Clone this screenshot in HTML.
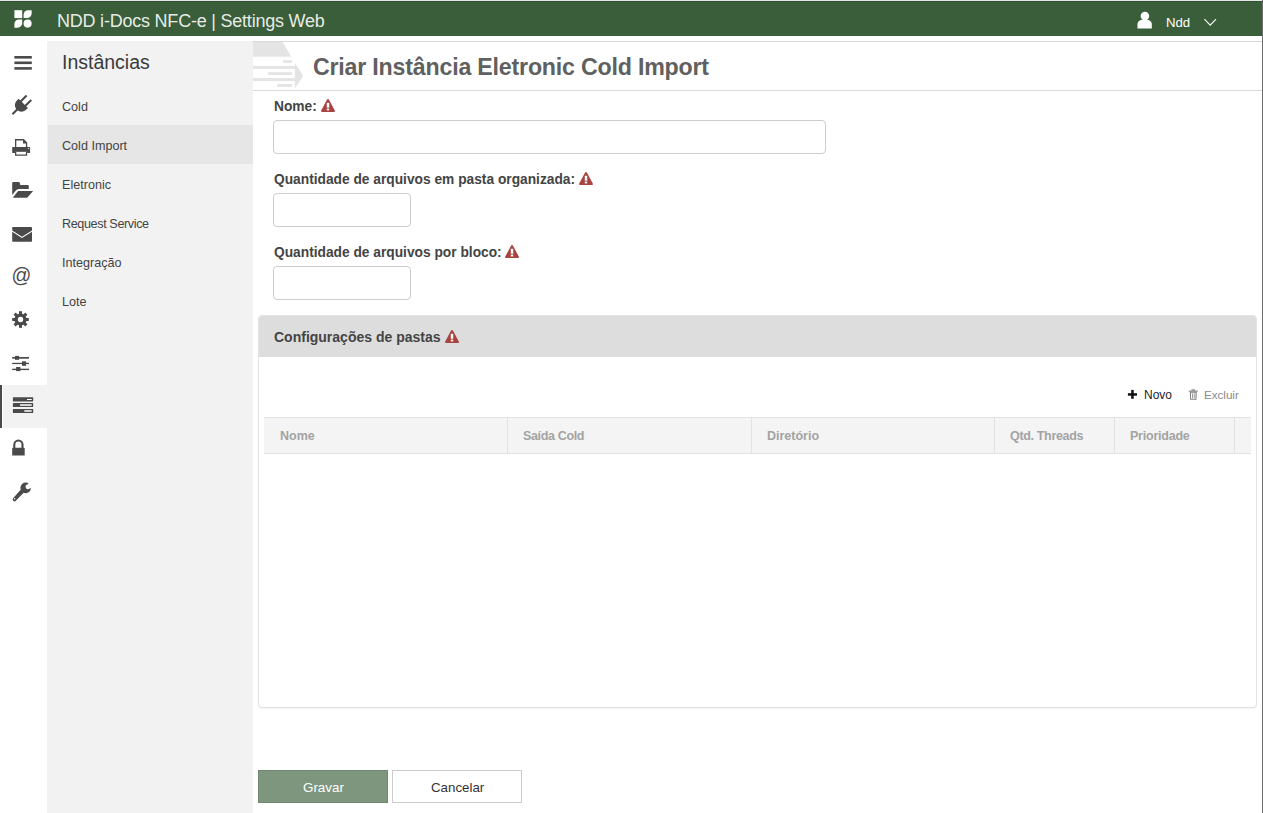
<!DOCTYPE html>
<html><head><meta charset="utf-8">
<style>
*{box-sizing:border-box;margin:0;padding:0}
html,body{width:1263px;height:813px;overflow:hidden;background:#fff}
body{position:relative;font-family:"Liberation Sans",sans-serif;color:#444}
.abs{position:absolute}
#topline{left:0;top:0;width:1263px;height:1px;background:#e6e6ea}
#hdr{left:0;top:1px;width:1262px;height:35px;background:#3b5e3a;border-top:1px solid #2f552f}
#rline{left:1262px;top:0;width:1px;height:813px;background:#6e6e6e}
.t{position:absolute;white-space:nowrap;line-height:1}
#rail{left:0;top:36px;width:47px;height:777px;background:#fff}
#side{left:47px;top:41px;width:206px;height:772px;background:#f2f2f2}
.item{position:absolute;left:0;width:206px;height:39px}
.item.sel{background:#e6e6e6;left:1px;width:205px}
.lbl{font-weight:bold;color:#444;font-size:13.75px}
.inp{position:absolute;border:1px solid #ccc;border-radius:4px;background:#fff}
.warn{position:absolute}
</style></head>
<body>
<div id="topline" class="abs"></div>
<div id="hdr" class="abs"></div>
<div id="rline" class="abs"></div>

<!-- logo -->
<svg class="abs" style="left:0;top:0" width="47" height="36" viewBox="0 0 47 36">
  <rect x="14.4" y="10.2" width="7.8" height="7.9" fill="#fff"/>
  <path d="M23.6 18.1 V14.8 A4.6 4.6 0 0 1 28.2 10.2 H31.6 V13.5 A4.6 4.6 0 0 1 27 18.1 Z" fill="#fff"/>
  <path d="M14.4 27.7 V24.1 A4.6 4.6 0 0 1 19 19.5 H22.2 V23.1 A4.6 4.6 0 0 1 17.6 27.7 Z" fill="#fff"/>
  <circle cx="27.6" cy="23.6" r="4.05" fill="#fff"/>
</svg>
<div class="t" style="left:57px;top:12px;font-size:18px;letter-spacing:-0.22px;color:rgba(255,255,255,0.9)">NDD i-Docs NFC-e | Settings Web</div>

<!-- user -->
<svg class="abs" style="left:1130px;top:6px" width="95" height="28" viewBox="1130 6 95 28">
  <circle cx="1144.9" cy="16" r="4.3" fill="#fff"/>
  <path d="M1137.5 28.6 V24.5 C1137.5 21.2 1140 19.6 1144.7 19.6 C1149.4 19.6 1151.8 21.2 1151.8 24.5 V28.6 Z" fill="#fff"/>
  <path d="M1204.4 19.2 L1210.2 25.2 L1216 19.2" fill="none" stroke="#fff" stroke-width="1.1"/>
</svg>
<div class="t" style="left:1166px;top:16px;font-size:13.2px;color:#fff">Ndd</div>

<div id="rail" class="abs"></div>
<div id="side" class="abs">
  <div class="t" style="left:15px;top:12px;font-size:19.5px;color:#3a3a3a">Instâncias</div>
  <div class="item" style="top:45px"><div class="t" style="left:15px;top:14.5px;font-size:12.6px">Cold</div></div>
  <div class="item sel" style="top:84px"><div class="t" style="left:14px;top:14.5px;font-size:12.6px">Cold Import</div></div>
  <div class="item" style="top:123px"><div class="t" style="left:15px;top:14.5px;font-size:12.6px">Eletronic</div></div>
  <div class="item" style="top:162px"><div class="t" style="left:15px;top:14.5px;font-size:12.6px;letter-spacing:-0.38px">Request Service</div></div>
  <div class="item" style="top:201px"><div class="t" style="left:15px;top:14.5px;font-size:12.6px">Integração</div></div>
  <div class="item" style="top:240px"><div class="t" style="left:15px;top:14.5px;font-size:12.6px">Lote</div></div>
</div>


<!-- rail icons -->
<div class="abs" style="left:3px;top:385px;width:44px;height:43px;background:#f2f2f2"></div>
<div class="abs" style="left:0;top:385px;width:2px;height:43px;background:#4a4a4a"></div>
<svg class="abs" style="left:0;top:36px" width="47" height="480" viewBox="0 36 47 480">
 <g fill="#4a4a4a">
  <!-- hamburger -->
  <rect x="14.4" y="56" width="17.4" height="2.6"/>
  <rect x="14.4" y="61.5" width="17.4" height="2.6"/>
  <rect x="14.4" y="67.1" width="17.4" height="2.6"/>
  <!-- plug -->
  <g transform="translate(23.27,103.42) rotate(45)">
    <path d="M-6.6 0 H6.6 V1.8 C6.6 6.4 3.6 9 0 9 C-3.6 9 -6.6 6.4 -6.6 1.8 Z"/>
    <rect x="-4.3" y="-8" width="2.1" height="8.5"/>
    <rect x="2.2" y="-8" width="2.1" height="8.5"/>
    <rect x="-1" y="8" width="2.1" height="7.4"/>
  </g>
  <!-- printer -->
  <path fill-rule="evenodd" d="M15 139.1 H23.8 L27.2 142.6 V147.2 H25.9 V143.4 H23 V140.4 H16.3 V147.2 H15 Z"/>
  <path d="M12.8 147 H29.5 Q30.1 147 30.1 147.6 V152.5 Q30.1 153.1 29.5 153.1 H27.2 V151.8 H15 V153.1 H12.8 Q12.2 153.1 12.2 152.5 V147.6 Q12.2 147 12.8 147 Z"/>
  <path fill-rule="evenodd" d="M15 151.6 H27.2 V155.8 H15 Z M16.3 151.8 V154.5 H25.9 V151.8 Z"/>
  <!-- folder open -->
  <path d="M12.2 183.2 Q12.2 182.1 13.3 182.1 H18.4 Q19.8 182.1 20 183.5 L20.2 185 H27.7 Q28.8 185 28.8 186.1 V188.9 H18.7 Q16.5 189.2 15 191.4 L12.2 195 Z"/>
  <path d="M18.1 190.9 H33.1 L27.2 197.8 H12.8 Z"/>
  <!-- envelope -->
  <path d="M12.2 227.6 Q12.2 226.9 12.9 226.9 H31.3 Q32 226.9 32 227.6 V230.4 L22 236.8 L12.2 230.4 Z"/>
  <path d="M12.2 231.8 L22 238.1 L32 231.8 V241 Q32 241.7 31.3 241.7 H12.9 Q12.2 241.7 12.2 241 Z"/>
  <!-- gear -->
  <g transform="translate(20.5,319.5)">
    <circle r="6.1"/>
    <rect x="-1.5" y="-8.3" width="3" height="16.6"/>
    <rect x="-1.5" y="-8.3" width="3" height="16.6" transform="rotate(45)"/>
    <rect x="-1.5" y="-8.3" width="3" height="16.6" transform="rotate(90)"/>
    <rect x="-1.5" y="-8.3" width="3" height="16.6" transform="rotate(135)"/>
    <circle r="2.7" fill="#fff"/>
  </g>
  <!-- sliders -->
  <rect x="12.2" y="357" width="16.8" height="1.7"/>
  <rect x="15" y="355.9" width="4.1" height="3.9"/>
  <rect x="12.2" y="362.8" width="16.8" height="1.3"/>
  <rect x="22" y="361.3" width="4.1" height="4.5"/>
  <rect x="12.2" y="368.7" width="16.8" height="1.4"/>
  <rect x="16.1" y="367" width="4.3" height="4.1"/>
  <!-- server -->
  <path fill-rule="evenodd" d="M12.9 397.6 Q12.9 397.2 13.3 397.2 H32.8 Q33.2 397.2 33.2 397.6 V401.1 Q33.2 401.5 32.8 401.5 H13.3 Q12.9 401.5 12.9 401.1 Z M27 399 V399.9 H31.6 V399 Z"/>
  <path fill-rule="evenodd" d="M12.9 403.4 Q12.9 403 13.3 403 H32.8 Q33.2 403 33.2 403.4 V406.5 Q33.2 406.9 32.8 406.9 H13.3 Q12.9 406.9 12.9 406.5 Z M20.1 404.5 V405.6 H31.6 V404.5 Z"/>
  <path fill-rule="evenodd" d="M12.9 409.3 Q12.9 408.9 13.3 408.9 H32.8 Q33.2 408.9 33.2 409.3 V412.5 Q33.2 412.9 32.8 412.9 H13.3 Q12.9 412.9 12.9 412.5 Z M24.4 410.4 V411.5 H31.6 V410.4 Z"/>
  <!-- lock -->
  <rect x="12.2" y="447.7" width="12.5" height="7.9" rx="0.7"/>
  <path d="M14.3 448 V444.6 A4.1 4.1 0 0 1 22.5 444.6 V448" fill="none" stroke="#4a4a4a" stroke-width="2.1"/>
  <!-- wrench -->
  <path fill-rule="evenodd" d="M25.9 482.6 A5.3 5.3 0 1 0 31 488 L28.8 489 A2.3 2.3 0 1 1 27.6 484.6 L28.4 482.9 Q27.3 482.6 25.9 482.6 Z"/>
  <path d="M20.9 489.6 L23.9 492.6 L15.6 500.9 Q14.5 502 13.2 500.7 Q12 499.4 13.1 498.3 Z"/>
 </g>
 <circle cx="14.6" cy="498.8" r="0.7" fill="#fff"/>
 <rect x="27" y="399" width="4.6" height="0.9" fill="#fff"/>
 <rect x="20.1" y="404.5" width="11.5" height="1.1" fill="#fff"/>
 <rect x="24.4" y="410.4" width="7.2" height="1.1" fill="#fff"/>
 <circle cx="28.7" cy="148.6" r="0.55" fill="#fff"/>
 <text x="11.6" y="282.3" font-family="Liberation Sans" font-size="19.5" fill="#4a4a4a">@</text>
</svg>

<!-- content -->
<div class="abs" style="left:253px;top:41px;width:1009px;height:1px;background:#d9d9d9"></div>
<div class="abs" style="left:253px;top:90px;width:1009px;height:1px;background:#d9d9d9"></div>
<div class="t" style="left:313px;top:56px;font-size:23.2px;letter-spacing:-0.2px;font-weight:bold;color:#606060">Criar Instância Eletronic Cold Import</div>

<div class="t lbl" style="left:274px;top:100px">Nome:</div>
<div class="inp" style="left:273px;top:120px;width:553px;height:34px"></div>
<div class="t lbl" style="left:274px;top:173px">Quantidade de arquivos em pasta organizada:</div>
<div class="inp" style="left:273px;top:193px;width:138px;height:34px"></div>
<div class="t lbl" style="left:274px;top:246px">Quantidade de arquivos por bloco:</div>
<div class="inp" style="left:273px;top:266px;width:138px;height:34px"></div>

<!-- panel -->
<div class="abs" style="left:258px;top:315px;width:999px;height:393px;border:1px solid #e3e3e3;border-radius:4px;background:#fff;overflow:hidden;box-shadow:0 1px 1px rgba(0,0,0,0.05)">
  <div class="abs" style="left:0;top:0;width:997px;height:41px;background:#dddddd"></div>
</div>
<div class="t" style="left:274px;top:330px;font-size:14px;font-weight:bold;color:#444">Configurações de pastas</div>

<!-- table header -->
<div class="abs" style="left:264px;top:417px;width:987px;height:37px;background:#f4f4f4;border-top:1px solid #e2e2e2;border-bottom:1px solid #e2e2e2"></div>
<div class="abs" style="left:507px;top:418px;width:1px;height:35px;background:#e2e2e2"></div>
<div class="abs" style="left:751px;top:418px;width:1px;height:35px;background:#e2e2e2"></div>
<div class="abs" style="left:994px;top:418px;width:1px;height:35px;background:#e2e2e2"></div>
<div class="abs" style="left:1114px;top:418px;width:1px;height:35px;background:#e2e2e2"></div>
<div class="abs" style="left:1234px;top:418px;width:1px;height:35px;background:#e2e2e2"></div>
<div class="t" style="left:280px;top:430px;font-size:12.5px;font-weight:bold;color:#a3a3a3">Nome</div>
<div class="t" style="left:523px;top:430px;font-size:12.5px;letter-spacing:-0.35px;font-weight:bold;color:#a3a3a3">Saída Cold</div>
<div class="t" style="left:767px;top:430px;font-size:12.5px;font-weight:bold;color:#a3a3a3">Diretório</div>
<div class="t" style="left:1010px;top:430px;font-size:12.5px;letter-spacing:-0.33px;font-weight:bold;color:#a3a3a3">Qtd. Threads</div>
<div class="t" style="left:1130px;top:430px;font-size:12.5px;letter-spacing:-0.23px;font-weight:bold;color:#a3a3a3">Prioridade</div>

<div class="t" style="left:1144px;top:389px;font-size:12px;color:#222">Novo</div>
<div class="t" style="left:1204px;top:389px;font-size:11.6px;color:#8a8a8a">Excluir</div>

<!-- buttons -->
<div class="abs" style="left:258px;top:770px;width:130px;height:33px;background:#7d967d;border:1px solid #6f886f"></div>
<div class="t" style="left:303px;top:781px;font-size:13.4px;color:#fff">Gravar</div>
<div class="abs" style="left:392px;top:770px;width:130px;height:33px;background:#fff;border:1px solid #ccc"></div>
<div class="t" style="left:431px;top:781px;font-size:13.3px;color:#333">Cancelar</div>


<!-- warnings -->
<svg class="abs" style="left:321px;top:99px" width="14" height="13" viewBox="0 0 14 13"><path d="M6.1 0.6 Q7 -0.6 7.9 0.6 L13.8 11.6 Q14.3 12.9 12.9 12.9 H1.1 Q-0.3 12.9 0.2 11.6 Z" fill="#a94442"/><rect x="5.8" y="3.8" width="2.4" height="4.9" fill="#fff"/><rect x="5.8" y="9.6" width="2.4" height="1.8" fill="#fff"/></svg>
<svg class="abs" style="left:578.5px;top:172px" width="14" height="13" viewBox="0 0 14 13"><path d="M6.1 0.6 Q7 -0.6 7.9 0.6 L13.8 11.6 Q14.3 12.9 12.9 12.9 H1.1 Q-0.3 12.9 0.2 11.6 Z" fill="#a94442"/><rect x="5.8" y="3.8" width="2.4" height="4.9" fill="#fff"/><rect x="5.8" y="9.6" width="2.4" height="1.8" fill="#fff"/></svg>
<svg class="abs" style="left:505px;top:245px" width="14" height="13" viewBox="0 0 14 13"><path d="M6.1 0.6 Q7 -0.6 7.9 0.6 L13.8 11.6 Q14.3 12.9 12.9 12.9 H1.1 Q-0.3 12.9 0.2 11.6 Z" fill="#a94442"/><rect x="5.8" y="3.8" width="2.4" height="4.9" fill="#fff"/><rect x="5.8" y="9.6" width="2.4" height="1.8" fill="#fff"/></svg>
<svg class="abs" style="left:445px;top:330px" width="14" height="13" viewBox="0 0 14 13"><path d="M6.1 0.6 Q7 -0.6 7.9 0.6 L13.8 11.6 Q14.3 12.9 12.9 12.9 H1.1 Q-0.3 12.9 0.2 11.6 Z" fill="#a94442"/><rect x="5.8" y="3.8" width="2.4" height="4.9" fill="#fff"/><rect x="5.8" y="9.6" width="2.4" height="1.8" fill="#fff"/></svg>

<!-- novo / excluir icons -->
<svg class="abs" style="left:1125px;top:385px" width="80" height="20" viewBox="1125 385 80 20">
  <rect x="1127.9" y="393.2" width="9.1" height="2.5" fill="#111"/>
  <rect x="1131.2" y="389.9" width="2.5" height="8.9" fill="#111"/>
  <g fill="#808080">
   <rect x="1188.8" y="390.6" width="8.9" height="1.1"/>
   <rect x="1191.4" y="389.4" width="3.7" height="1.2"/>
   <path fill-rule="evenodd" d="M1189.8 391.8 H1196.8 L1196.4 399.8 H1190.2 Z M1190.9 392.8 L1191.1 398.8 H1195.4 L1195.6 392.8 Z"/>
   <rect x="1192" y="393.4" width="0.8" height="4.8"/>
   <rect x="1193.8" y="393.4" width="0.8" height="4.8"/>
  </g>
</svg>
<!-- page header graphic -->
<svg class="abs" style="left:253px;top:42px" width="52" height="48" viewBox="253 42 52 48">
  <g fill="#e4e4e4">
   <path d="M253 42 H282.7 L291.3 56.8 H253 Z"/>
   <rect x="283.2" y="60.2" width="8.8" height="2.6"/>
   <rect x="253" y="65.9" width="42" height="2.9"/>
   <rect x="268.1" y="72.2" width="23.9" height="2.7"/>
   <rect x="253" y="78.1" width="42" height="3"/>
   <rect x="277.1" y="84.1" width="14.9" height="2.8"/>
   <path d="M294.9 63 L303.2 75.8 L294.9 88.6 Z"/>
  </g>
</svg>
</body></html>
